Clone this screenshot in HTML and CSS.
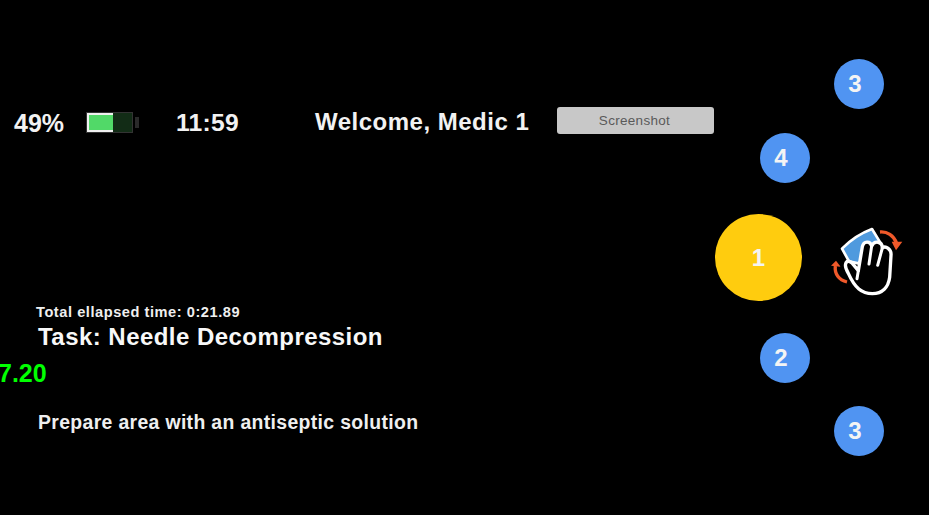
FILE: index.html
```html
<!DOCTYPE html>
<html lang="en">
<head>
<meta charset="utf-8">
<title>Medic HUD</title>
<link rel="stylesheet" href="styles.css">
</head>
<body>
<main class="stage">
  <header class="status">
    <span class="pct">49%</span>
    <span class="battery"><span class="battery-body"><span class="battery-level"></span></span><span class="battery-cap"></span></span>
    <span class="clock">11:59</span>
    <span class="welcome">Welcome, Medic 1</span>
    <button class="shot">Screenshot</button>
  </header>
  <section class="task">
    <div class="elapsed">Total ellapsed time: 0:21.89</div>
    <h1 class="title">Task: Needle Decompression</h1>
    <div class="timer">7.20</div>
    <p class="step">Prepare area with an antiseptic solution</p>
  </section>
  <div class="node n3a"><span class="digit">3</span></div>
  <div class="node n4"><span class="digit">4</span></div>
  <div class="node main-node">1</div>
  <div class="node n2"><span class="digit">2</span></div>
  <div class="node n3b"><span class="digit">3</span></div>
  <svg class="gesture" viewBox="0 0 240 240" aria-hidden="true">
    <path class="card" d="M51 86 Q90 46 141 27 L166 68 L100 130 L72 124 Z"/>
    <path class="hand" d="M70 160 C52 130 66 114 82 130 L100 152 L112 80 C116 62 136 62 140 78 C148 60 172 64 172 84 C182 76 200 88 198 106 L194 172 C190 202 172 221 142 221 C110 221 90 204 70 160 Z"/>
    <path class="line" d="M100 152 L96 176 M140 78 L132 132 M172 84 L158 136"/>
    <path class="arrow-line" d="M165 36 C186 34 206 46 215 70"/>
    <path class="arrow-head" d="M200 65 L232 65 L213 91 Z"/>
    <path class="arrow-line" d="M66 186 C42 180 28 162 31 138"/>
    <path class="arrow-head" d="M18 137 L33 122 L47 140 Z"/>
  </svg>
</main>
</body>
</html>
```
FILE: styles.css
```css
* { box-sizing: border-box; }
html, body { margin: 0; height: 100%; background: #000; overflow: hidden; }
body { font-family: "Liberation Sans", Arial, sans-serif; font-weight: 700; }
.stage { position: relative; width: 929px; height: 515px; overflow: hidden; }

.status { display: flex; align-items: center; height: 27px; margin-top: 107px; padding-left: 14px; color: #f2f2f2; }
.pct { width: 72px; font-size: 25px; margin-top: 6px; }
.battery { display: flex; align-items: center; width: 90px; height: 22px; margin-top: 4px; }
.battery-body { display: block; width: 47px; height: 21px; border: 1px solid #333; background: #122c16; }
.battery-level { display: block; width: 26px; height: 100%; border: 2px solid #f0f0f0; border-right: 0; background: #51d968; }
.battery-cap { width: 4px; height: 11px; background: #2a2a2a; margin-left: 2px; }
.clock { width: 139px; font-size: 24.6px; letter-spacing: .3px; margin-top: 4px; }
.welcome { width: 242px; font-size: 24px; letter-spacing: .5px; margin-top: 2px; }
.shot { width: 157px; height: 27px; padding: 0 2px 0 0; border: 0; border-radius: 3px; background: #c8c8c8; color: #5a5a5a; font: 400 13.5px "Liberation Sans", Arial, sans-serif; letter-spacing: .3px; }

.task { margin-top: 170px; padding-left: 36px; color: #efefef; }
.elapsed { font-size: 14.6px; line-height: 17px; letter-spacing: .55px; }
.title { margin: 2px 0 0 2px; font-size: 24px; line-height: 28px; color: #f8f8f8; letter-spacing: .46px; }
.timer { margin: 8px 0 0 -44px; font-size: 25px; line-height: 28px; color: #0f0; padding-left: 6px; }
.step { margin: 23px 0 0 2px; font-size: 19.4px; line-height: 24px; letter-spacing: .35px; }

.node { position: absolute; display: flex; align-items: center; justify-content: center; width: 50px; height: 50px; border-radius: 50%; background: #5094f2; color: #f4f4f4; font-size: 24px; }
.digit { margin-right: 8px; }
.n3a { left: 834px; top: 59px; }
.n4 { left: 760px; top: 133px; }
.n2 { left: 760px; top: 333px; }
.n3b { left: 834px; top: 406px; }
.main-node { left: 715px; top: 214px; width: 87px; height: 87px; background: #ffcc0e; }

.gesture { position: absolute; left: 825px; top: 220px; width: 80px; height: 80px; }
.card { fill: #4f9ade; stroke: #fff; stroke-width: 8; stroke-linejoin: round; }
.hand { fill: #000; stroke: #fff; stroke-width: 10; stroke-linejoin: round; }
.line { fill: none; stroke: #fff; stroke-width: 9; stroke-linecap: round; }
.arrow-line { fill: none; stroke: #f0592a; stroke-width: 10; }
.arrow-head { fill: #f0592a; }
```
